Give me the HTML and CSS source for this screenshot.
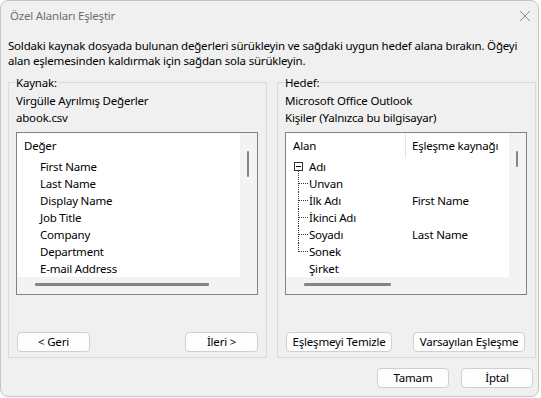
FILE: index.html
```html
<!DOCTYPE html>
<html lang="tr">

<head>
    <meta charset="UTF-8">
    <meta name="viewport" content="width=device-width, initial-scale=1.0">
    <title>Özel Alanları Eşleştir</title>
    <link rel="stylesheet" href="styles.css">
</head>

<body>
    <div class="window">
        <div class="titlebar">
            <span class="title">Özel Alanları Eşleştir</span>
            <svg class="close" width="12" height="12" viewBox="0 0 12 12">
                <path d="M1 1L11 11M11 1L1 11" stroke="#8c8c8c" stroke-width="1" fill="none" />
            </svg>
        </div>
        <p class="intro">Soldaki kaynak dosyada bulunan değerleri sürükleyin ve sağdaki uygun hedef alana bırakın. Öğeyi alan eşlemesinden kaldırmak için sağdan sola sürükleyin.</p>

        <div class="groups">
            <fieldset class="group">
                <legend>Kaynak:</legend>
                <div class="info">Virgülle Ayrılmış Değerler</div>
                <div class="info">abook.csv</div>
                <div class="listbox">
                    <div class="list-content">
                        <div class="list-head">Değer</div>
                        <div class="list-item">First Name</div>
                        <div class="list-item">Last Name</div>
                        <div class="list-item">Display Name</div>
                        <div class="list-item">Job Title</div>
                        <div class="list-item">Company</div>
                        <div class="list-item">Department</div>
                        <div class="list-item">E-mail Address</div>
                    </div>
                    <div class="vscroll"><div class="vthumb"></div></div>
                    <div class="hscroll"><div class="hthumb"></div></div>
                    <div class="corner"></div>
                </div>
                <div class="group-buttons">
                    <button class="btn btn-nav">&lt; Geri</button>
                    <button class="btn btn-nav">İleri &gt;</button>
                </div>
            </fieldset>

            <fieldset class="group">
                <legend>Hedef:</legend>
                <div class="info">Microsoft Office Outlook</div>
                <div class="info">Kişiler (Yalnızca bu bilgisayar)</div>
                <div class="listbox">
                    <div class="list-content">
                        <div class="tree-head">
                            <div class="col-name">Alan</div>
                            <div class="col-map">Eşleşme kaynağı</div>
                        </div>
                        <div class="tree-row">
                            <svg class="twig" width="16" height="17" viewBox="0 0 16 17">
                                <rect x="1.5" y="4.5" width="8" height="8" fill="#fff" stroke="#333" />
                                <path d="M3 8.5H8" stroke="#000" />
                                <path d="M5.5 13V17" stroke="#333" stroke-dasharray="1 1" />
                            </svg>
                            <span class="col-name">Adı</span>
                        </div>
                        <div class="tree-row">
                            <svg class="twig" width="16" height="17" viewBox="0 0 16 17">
                                <path d="M5.5 0V17M6 8.5H16" stroke="#333" stroke-dasharray="1 1" />
                            </svg>
                            <span class="col-name">Unvan</span>
                        </div>
                        <div class="tree-row">
                            <svg class="twig" width="16" height="17" viewBox="0 0 16 17">
                                <path d="M5.5 0V17M6 8.5H16" stroke="#333" stroke-dasharray="1 1" />
                            </svg>
                            <span class="col-name">İlk Adı</span>
                            <span class="col-map">First Name</span>
                        </div>
                        <div class="tree-row">
                            <svg class="twig" width="16" height="17" viewBox="0 0 16 17">
                                <path d="M5.5 0V17M6 8.5H16" stroke="#333" stroke-dasharray="1 1" />
                            </svg>
                            <span class="col-name">İkinci Adı</span>
                        </div>
                        <div class="tree-row">
                            <svg class="twig" width="16" height="17" viewBox="0 0 16 17">
                                <path d="M5.5 0V17M6 8.5H16" stroke="#333" stroke-dasharray="1 1" />
                            </svg>
                            <span class="col-name">Soyadı</span>
                            <span class="col-map">Last Name</span>
                        </div>
                        <div class="tree-row">
                            <svg class="twig" width="16" height="17" viewBox="0 0 16 17">
                                <path d="M5.5 0V9M6 8.5H16" stroke="#333" stroke-dasharray="1 1" />
                            </svg>
                            <span class="col-name">Sonek</span>
                        </div>
                        <div class="tree-row">
                            <span class="twig"></span>
                            <span class="col-name">Şirket</span>
                        </div>
                    </div>
                    <div class="vscroll"><div class="vthumb vthumb-short"></div></div>
                    <div class="hscroll"><div class="hthumb hthumb-short"></div></div>
                    <div class="corner"></div>
                </div>
                <div class="group-buttons group-buttons-right">
                    <button class="btn btn-clear">Eşleşmeyi Temizle</button>
                    <button class="btn btn-default">Varsayılan Eşleşme</button>
                </div>
            </fieldset>
        </div>

        <div class="dialog-buttons">
            <button class="btn btn-dialog">Tamam</button>
            <button class="btn btn-dialog">İptal</button>
        </div>
    </div>
</body>

</html>
```

FILE: styles.css
```css
body {
    margin: 0;
    background-color: #ffffff;
    font-family: "Noto Sans", "Open Sans", sans-serif;
    font-size: 11.5px;
    letter-spacing: -0.2px;
    color: #000000;
}

.window {
    width: 539px;
    height: 397px;
    box-sizing: border-box;
    border: 1px solid #c4c4c4;
    border-radius: 8px;
    background-color: #f0f0f0;
    overflow: hidden;
}

.titlebar {
    height: 30px;
    display: flex;
    align-items: center;
    justify-content: space-between;
    padding-left: 9px;
    padding-right: 7px;
}

.title {
    color: #6e6e6e;
    line-height: 30px;
}

.intro {
    margin: 0;
    padding: 7px 7px 0 7px;
    line-height: 15px;
}

.groups {
    display: flex;
    gap: 10px;
    padding-left: 7px;
    margin-top: 7px;
}

.group {
    width: 259px;
    box-sizing: border-box;
    margin: 0;
    padding: 2px 7px 5px 7px;
    border: 1px solid #dadada;
    min-inline-size: 0;
}

.group legend {
    padding: 0 1px;
    margin-left: -1px;
    line-height: 15px;
}

.info {
    line-height: 17px;
    white-space: nowrap;
}

.listbox {
    margin-top: 6px;
    width: 242px;
    height: 163px;
    box-sizing: border-box;
    border: 1px solid #828282;
    display: grid;
    grid-template-columns: 1fr 17px;
    grid-template-rows: 1fr 17px;
}

.list-content {
    background-color: #ffffff;
    overflow: hidden;
}

.list-head {
    height: 25px;
    line-height: 25px;
    padding-left: 7px;
}

.list-item {
    height: 17px;
    line-height: 17px;
    padding-left: 23px;
}

.vscroll,
.hscroll,
.corner {
    background-color: #f3f3f3;
}

.vthumb {
    margin: 18px 0 0 7px;
    width: 2px;
    height: 26px;
    border-radius: 1px;
    background-color: #858585;
}

.vthumb-short {
    height: 16px;
}

.hthumb {
    margin: 6px 0 0 18px;
    width: 174px;
    height: 3px;
    border-radius: 1px;
    background-color: #858585;
}

.hthumb-short {
    width: 87px;
}

.tree-head {
    display: flex;
    height: 25px;
    line-height: 25px;
}

.tree-head .col-name {
    width: 112px;
    padding-left: 7px;
    border-right: 1px solid #e5e5e5;
}

.tree-head .col-map {
    padding-left: 6px;
    white-space: nowrap;
}

.tree-row {
    display: flex;
    height: 17px;
    line-height: 17px;
    padding-left: 7px;
}

.twig {
    display: block;
    width: 16px;
    height: 17px;
    flex-shrink: 0;
}

.tree-row .col-name {
    width: 103px;
}

.tree-row .col-map {
    white-space: nowrap;
}

.group-buttons {
    display: flex;
    justify-content: space-between;
    margin-top: 37px;
    padding: 0 1px;
}

.group-buttons-right {
    padding: 0 3px 0 1px;
}

.btn {
    height: 20px;
    padding: 0;
    border: 1px solid #d0d0d0;
    border-radius: 4px;
    background-color: #fdfdfd;
    font-family: "Noto Sans", "Open Sans", sans-serif;
    font-size: 11.5px;
    letter-spacing: -0.2px;
    line-height: 18px;
    color: #000000;
}

.btn-nav {
    width: 73px;
}

.btn-clear {
    width: 106px;
}

.btn-default {
    width: 112px;
}

.dialog-buttons {
    display: flex;
    justify-content: flex-end;
    gap: 12px;
    margin-top: 10px;
    padding-right: 5px;
}

.btn-dialog {
    width: 72px;
}
```
